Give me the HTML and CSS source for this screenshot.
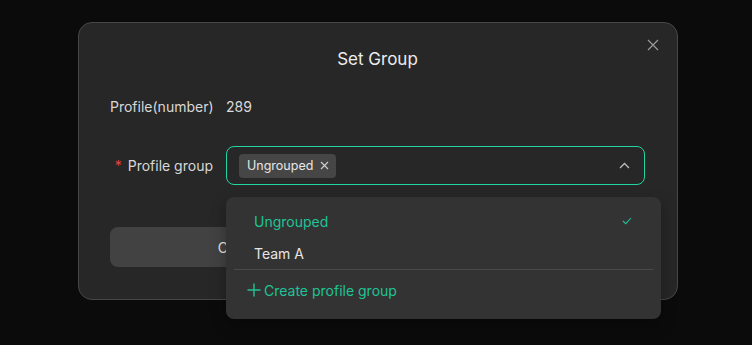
FILE: index.html
```html
<!DOCTYPE html>
<html lang="en">
<head>
    <meta charset="UTF-8">
    <meta name="viewport" content="width=device-width, initial-scale=1.0">
    <title>Set Group</title>
    <link rel="stylesheet" href="styles.css">
</head>
<body>
    <div class="modal">
        <button class="close" aria-label="Close">
            <svg width="12" height="12" viewBox="0 0 12 12"><path d="M1 1L11 11M11 1L1 11" stroke="#9a9a9a" stroke-width="1.2" fill="none"/></svg>
        </button>
        <h1>Set Group</h1>

        <div class="row">
            <span class="label">Profile(number)</span>
            <span class="value">289</span>
        </div>

        <div class="row row-group">
            <span class="label"><em>*</em> Profile group</span>
            <div class="select-wrap">
                <div class="select">
                    <span class="tag">Ungrouped
                        <svg width="9" height="9" viewBox="0 0 9 9"><path d="M1 1L8 8M8 1L1 8" stroke="#d0d0d0" stroke-width="1.1" fill="none"/></svg>
                    </span>
                    <svg class="arrow" width="11" height="7" viewBox="0 0 11 7"><path d="M1 6L5.5 1.5L10 6" stroke="#bdbdbd" stroke-width="1.3" fill="none"/></svg>
                </div>
                <div class="dropdown">
                    <div class="option selected">Ungrouped
                        <svg width="10" height="8" viewBox="0 0 10 8"><path d="M1 4L3.8 6.6L9 1" stroke="#1fc495" stroke-width="1.1" fill="none"/></svg>
                    </div>
                    <div class="option">Team A</div>
                    <div class="divider"></div>
                    <div class="create">
                        <svg width="14" height="14" viewBox="0 0 14 14"><path d="M7 0.5V13.5M0.5 7H13.5" stroke="#1fc495" stroke-width="1.4" fill="none"/></svg>
                        Create profile group
                    </div>
                </div>
            </div>
        </div>

        <div class="actions">
            <button class="btn">Cancel</button>
            <button class="btn btn-primary">OK</button>
        </div>
    </div>
</body>
</html>
```

FILE: styles.css
```css
:root {
    --green: #1fc495;
    --green-border: #22d6a2;
    --text: #e2e2e2;
    --modal: #272727;
}

body {
    margin: 0;
    background: #0b0b0b;
    font-family: Inter, "Liberation Sans", sans-serif;
    color: var(--text);
    height: 345px;
    overflow: hidden;
}

.modal {
    position: relative;
    box-sizing: border-box;
    width: 600px;
    height: 278px;
    margin: 22px 0 0 78px;
    background: var(--modal);
    border: 1px solid #474747;
    border-radius: 14px;
    padding: 26px 32px 0 31px;
}

.close {
    position: absolute;
    top: 16px;
    right: 18px;
    background: none;
    border: none;
    padding: 0;
    display: flex;
}

h1 {
    margin: 0 0 29px;
    text-align: center;
    font-size: 17px;
    font-weight: 400;
    line-height: 20px;
    color: #ececec;
}

.row {
    display: flex;
    align-items: center;
    gap: 13px;
    font-size: 14px;
}

.label {
    width: 103px;
    text-align: right;
    white-space: nowrap;
    color: #d8d8d8;
}

.label em {
    font-style: normal;
    color: #e0463f;
    margin-right: 2px;
}

.value {
    color: #dadada;
}

.row-group {
    margin-top: 31px;
}

.select-wrap {
    position: relative;
    flex: 1;
}

.select {
    box-sizing: border-box;
    height: 39px;
    border: 1px solid var(--green-border);
    border-radius: 8px;
    display: flex;
    align-items: center;
    justify-content: space-between;
    padding: 0 14px 0 12px;
}

.tag {
    display: flex;
    align-items: center;
    gap: 7px;
    height: 24px;
    padding: 0 7px 0 8px;
    background: #464646;
    border-radius: 4px;
    font-size: 12.5px;
    color: #e6e6e6;
}

.dropdown {
    position: absolute;
    top: 51px;
    left: 0;
    width: 435px;
    box-sizing: border-box;
    background: #333333;
    border-radius: 8px;
    padding: 8px 8px 9px;
    z-index: 2;
    box-shadow: 0 6px 16px rgba(0, 0, 0, 0.3);
}

.option {
    display: flex;
    align-items: center;
    justify-content: space-between;
    height: 32px;
    padding: 0 21px 0 20px;
    font-size: 14px;
    color: #e6e6e6;
}

.option.selected {
    color: var(--green);
}

.divider {
    height: 1px;
    background: #4a4a4a;
}

.create {
    display: flex;
    align-items: center;
    gap: 3px;
    height: 40px;
    padding: 0 13px;
    font-size: 14px;
    color: var(--green);
}

.actions {
    display: flex;
    gap: 12px;
    margin-top: 42px;
}

.btn {
    flex: 1;
    height: 40px;
    border: none;
    border-radius: 8px;
    background: #424242;
    color: #e6e6e6;
    font-family: inherit;
    font-size: 14px;
}

.btn-primary {
    background: var(--green);
    color: #111;
}
```
